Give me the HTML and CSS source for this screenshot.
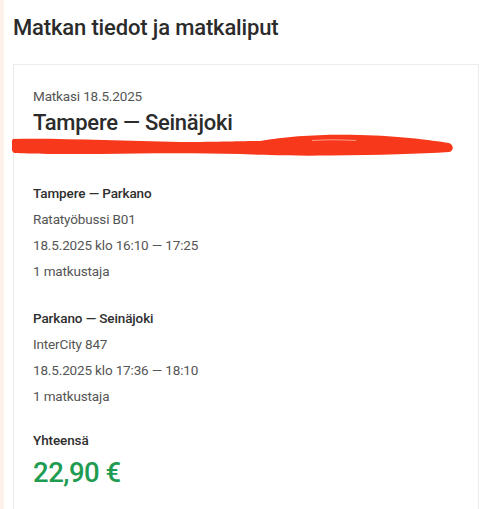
FILE: index.html
```html
<!DOCTYPE html>
<html lang="fi">
<head>
<meta charset="utf-8">
<title>Matkan tiedot ja matkaliput</title>
<link rel="stylesheet" href="styles.css">
</head>
<body>
<div class="page">
  <h1 class="title">Matkan tiedot ja matkaliput</h1>
  <section class="card">
    <div class="card-head">
      <div class="date">Matkasi 18.5.2025</div>
      <h2 class="route">Tampere — Seinäjoki</h2>
      <svg class="scribble" width="444" height="26" viewBox="12 132 444 26" aria-hidden="true">
        <path fill="#f7381b" d="M13,139 C60,138 120,141 180,142 C220,142 240,141 260,141 C290,136 320,134 360,135 C400,136 430,140 449,143 C454,145 454,151 449,152 C420,154 380,155 330,155.5 C290,156 260,155 240,154 C200,153 150,153 100,154 C60,154 30,154 14,153 C10,150 10,142 13,139 Z"/>
        <path fill="none" stroke="#fb9a86" stroke-width="1.2" d="M312,140.5 C325,139.5 340,139.5 356,140.5"/>
      </svg>
    </div>
    <div class="leg">
      <div class="leg-title">Tampere — Parkano</div>
      <div class="line">Ratatyöbussi B01</div>
      <div class="line">18.5.2025 klo 16:10 — 17:25</div>
      <div class="line">1 matkustaja</div>
    </div>
    <div class="leg">
      <div class="leg-title">Parkano — Seinäjoki</div>
      <div class="line">InterCity 847</div>
      <div class="line">18.5.2025 klo 17:36 — 18:10</div>
      <div class="line">1 matkustaja</div>
    </div>
    <div class="total">
      <div class="total-label">Yhteensä</div>
      <div class="price">22,90 €</div>
    </div>
  </section>
</div>
</body>
</html>
```

FILE: styles.css
```css
* { box-sizing: border-box; }
html, body {
  margin: 0;
  padding: 0;
  background: #ffffff;
}
body {
  font-family: Roboto, "Liberation Sans", sans-serif;
  color: #222;
  height: 509px;
  overflow: hidden;
}
.page {
  border-left: 4px solid #fdf1ea;
  padding: 0 1px 0 9px;
  min-height: 509px;
}
.title {
  margin: 0;
  padding-top: 14px;
  font-size: 22px;
  line-height: 28px;
  letter-spacing: -0.15px;
  font-weight: 500;
  color: #2b2b2b;
}
.card {
  margin-top: 22px;
  border: 1px solid #ececec;
  border-bottom: none;
  padding: 21px 19px 30px;
  min-height: 460px;
}
.card-head {
  position: relative;
  padding-bottom: 43px;
}
.date {
  font-size: 13.5px;
  line-height: 20px;
  letter-spacing: -0.15px;
  color: #555;
}
.route {
  margin: 3px 0 0;
  font-size: 22px;
  line-height: 28px;
  letter-spacing: -0.25px;
  font-weight: 500;
  color: #2b2b2b;
}
.scribble {
  position: absolute;
  left: -21px;
  top: 46px;
}
.leg + .leg { margin-top: 21px; }
.leg-title {
  font-size: 13.5px;
  line-height: 26px;
  letter-spacing: -0.1px;
  font-weight: 500;
  color: #2e2e2e;
}
.line {
  font-size: 13.5px;
  line-height: 26px;
  letter-spacing: -0.15px;
  color: #555;
}
.total { margin-top: 18px; }
.total-label {
  font-size: 13.5px;
  line-height: 26px;
  letter-spacing: -0.1px;
  font-weight: 500;
  color: #2e2e2e;
}
.price {
  margin-top: 2px;
  font-size: 27.5px;
  line-height: 36px;
  letter-spacing: -0.5px;
  font-weight: 500;
  color: #1f9c52;
}
```
